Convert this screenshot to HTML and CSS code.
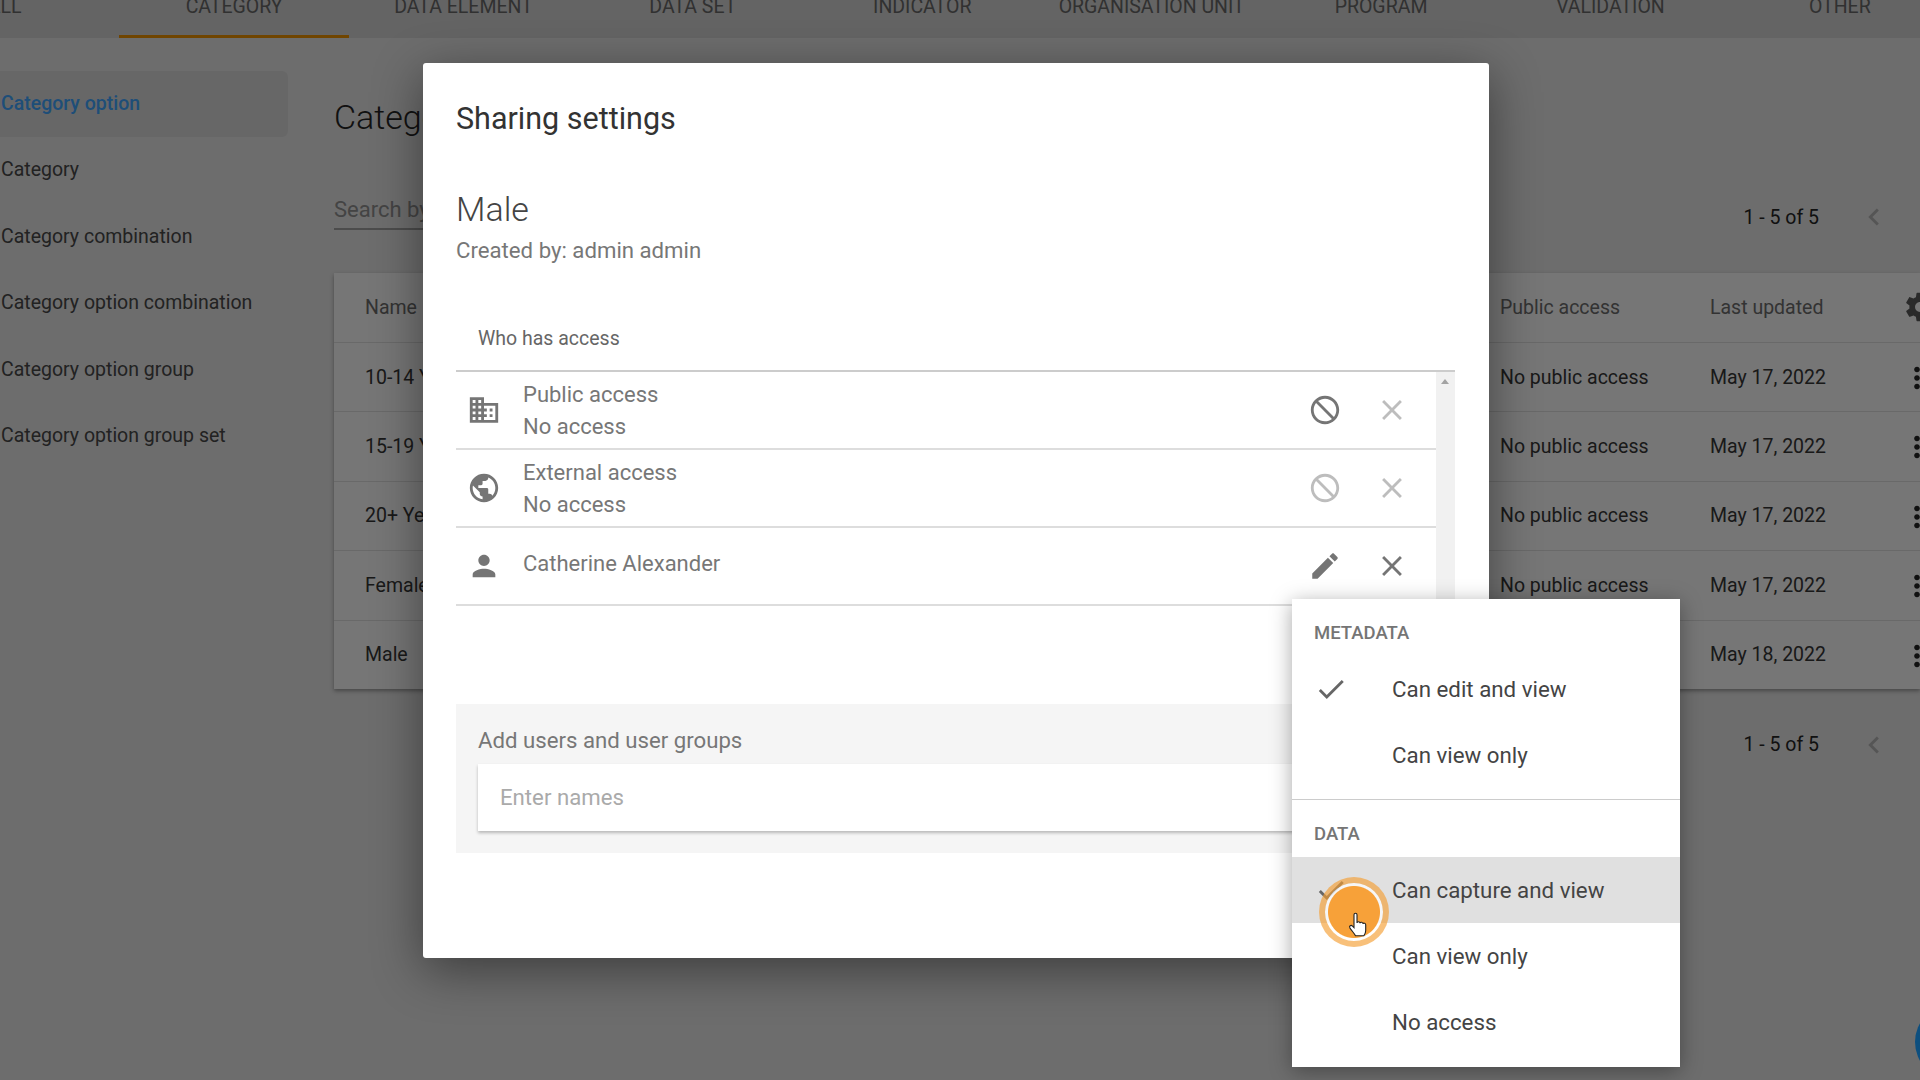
FILE: index.html
```html
<!DOCTYPE html>
<html>
<head>
<meta charset="utf-8">
<title>Sharing settings</title>
<link rel="stylesheet" href="styles.css">
</head>
<body>
<svg class="sprites" xmlns="http://www.w3.org/2000/svg">
  <symbol id="i-domain" viewBox="0 0 24 24"><path d="M12 7V3H2v18h20V7H12zM6 19H4v-2h2v2zm0-4H4v-2h2v2zm0-4H4V9h2v2zm0-4H4V5h2v2zm4 12H8v-2h2v2zm0-4H8v-2h2v2zm0-4H8V9h2v2zm0-4H8V5h2v2zm10 12h-8v-2h2v-2h-2v-2h2v-2h-2V9h8v10zm-2-8h-2v2h2v-2zm0 4h-2v2h2v-2z"/></symbol>
  <symbol id="i-public" viewBox="0 0 24 24"><path d="M12 2C6.48 2 2 6.48 2 12s4.48 10 10 10 10-4.48 10-10S17.52 2 12 2zm-1 17.93c-3.95-.49-7-3.85-7-7.93 0-.62.08-1.21.21-1.79L9 15v1c0 1.1.9 2 2 2v1.93zm6.9-2.54c-.26-.81-1-1.39-1.9-1.39h-1v-3c0-.55-.45-1-1-1H8v-2h2c.55 0 1-.45 1-1V7h2c1.1 0 2-.9 2-2v-.41c2.93 1.19 5 4.06 5 7.41 0 2.08-.8 3.97-2.1 5.39z"/></symbol>
  <symbol id="i-person" viewBox="0 0 24 24"><path d="M12 12c2.21 0 4-1.79 4-4s-1.79-4-4-4-4 1.79-4 4 1.79 4 4 4zm0 2c-2.67 0-8 1.34-8 4v2h16v-2c0-2.66-5.33-4-8-4z"/></symbol>
  <symbol id="i-ban" viewBox="0 0 24 24"><path d="M12 2C6.48 2 2 6.48 2 12s4.48 10 10 10 10-4.48 10-10S17.52 2 12 2zm0 18c-4.42 0-8-3.58-8-8 0-1.85.63-3.55 1.69-4.9L16.9 18.31C15.55 19.37 13.85 20 12 20zm6.31-3.1L7.1 5.69C8.45 4.63 10.15 4 12 4c4.42 0 8 3.58 8 8 0 1.85-.63 3.55-1.69 4.9z"/></symbol>
  <symbol id="i-edit" viewBox="0 0 24 24"><path d="M3 17.25V21h3.75L17.81 9.94l-3.75-3.75L3 17.25zM20.71 7.04c.39-.39.39-1.02 0-1.41l-2.34-2.34c-.39-.39-1.02-.39-1.41 0l-1.83 1.83 3.75 3.75 1.83-1.83z"/></symbol>
  <symbol id="i-clear" viewBox="0 0 24 24"><path d="M19 6.41L17.59 5 12 10.59 6.41 5 5 6.41 10.59 12 5 17.59 6.41 19 12 13.41 17.59 19 19 17.59 13.41 12z"/></symbol>
  <symbol id="i-check" viewBox="0 0 24 24"><path d="M9 16.17L4.83 12l-1.42 1.41L9 19 21 7l-1.41-1.41z"/></symbol>
  <symbol id="i-gear" viewBox="0 0 24 24"><path d="M19.43 12.98c.04-.32.07-.64.07-.98s-.03-.66-.07-.98l2.11-1.65c.19-.15.24-.42.12-.64l-2-3.46c-.12-.22-.39-.3-.61-.22l-2.49 1c-.52-.4-1.08-.73-1.69-.98l-.38-2.65C14.46 2.18 14.25 2 14 2h-4c-.25 0-.46.18-.49.42l-.38 2.65c-.61.25-1.17.59-1.69.98l-2.49-1c-.23-.09-.49 0-.61.22l-2 3.46c-.13.22-.07.49.12.64l2.11 1.65c-.04.32-.07.65-.07.98s.03.66.07.98l-2.11 1.65c-.19.15-.24.42-.12.64l2 3.46c.12.22.39.3.61.22l2.49-1c.52.4 1.08.73 1.69.98l.38 2.65c.03.24.24.42.49.42h4c.25 0 .46-.18.49-.42l.38-2.65c.61-.25 1.17-.59 1.69-.98l2.49 1c.23.09.49 0 .61-.22l2-3.46c.12-.22.07-.49-.12-.64l-2.11-1.65zM12 15.5c-1.93 0-3.5-1.57-3.5-3.5s1.57-3.5 3.5-3.5 3.5 1.57 3.5 3.5-1.57 3.5-3.5 3.5z"/></symbol>
  <symbol id="i-more" viewBox="0 0 24 24"><path d="M12 8c1.1 0 2-.9 2-2s-.9-2-2-2-2 .9-2 2 .9 2 2 2zm0 2c-1.1 0-2 .9-2 2s.9 2 2 2 2-.9 2-2-.9-2-2-2zm0 6c-1.1 0-2 .9-2 2s.9 2 2 2 2-.9 2-2-.9-2-2-2z"/></symbol>
  <symbol id="i-prev" viewBox="0 0 24 24"><path d="M15.41 7.41L14 6l-6 6 6 6 1.41-1.41L10.83 12z"/></symbol>
</svg>

<div class="page">
  <nav class="tabs">
    <a class="tab">All</a>
    <a class="tab tab-active">Category</a>
    <a class="tab">Data element</a>
    <a class="tab">Data set</a>
    <a class="tab">Indicator</a>
    <a class="tab">Organisation unit</a>
    <a class="tab">Program</a>
    <a class="tab">Validation</a>
    <a class="tab">Other</a>
  </nav>

  <div class="content">
    <ul class="side">
      <li class="side-item side-active">Category option</li>
      <li class="side-item">Category</li>
      <li class="side-item">Category combination</li>
      <li class="side-item">Category option combination</li>
      <li class="side-item">Category option group</li>
      <li class="side-item">Category option group set</li>
    </ul>

    <main class="list">
      <h1 class="list-title">Category option</h1>
      <div class="list-tools">
        <div class="search">Search by name</div>
        <div class="pager pager-top">
          <span>1 - 5 of 5</span>
          <svg class="pager-icon"><use href="#i-prev"/></svg>
        </div>
      </div>
      <div class="card">
        <div class="tr th">
          <span>Name</span><span>Public access</span><span>Last updated</span>
          <svg class="gear"><use href="#i-gear"/></svg>
        </div>
        <div class="tr">
          <span>10-14 Years</span><span>No public access</span><span>May 17, 2022</span>
          <svg class="more"><use href="#i-more"/></svg>
        </div>
        <div class="tr">
          <span>15-19 Years</span><span>No public access</span><span>May 17, 2022</span>
          <svg class="more"><use href="#i-more"/></svg>
        </div>
        <div class="tr">
          <span>20+ Years</span><span>No public access</span><span>May 17, 2022</span>
          <svg class="more"><use href="#i-more"/></svg>
        </div>
        <div class="tr">
          <span>Female</span><span>No public access</span><span>May 17, 2022</span>
          <svg class="more"><use href="#i-more"/></svg>
        </div>
        <div class="tr">
          <span>Male</span><span>No public access</span><span>May 18, 2022</span>
          <svg class="more"><use href="#i-more"/></svg>
        </div>
      </div>
      <div class="pager pager-bottom">
        <span>1 - 5 of 5</span>
        <svg class="pager-icon"><use href="#i-prev"/></svg>
      </div>
    </main>
  </div>

  <div class="fab"></div>
  <div class="scrim"></div>

  <section class="modal">
    <h2 class="modal-title">Sharing settings</h2>
    <h3 class="object-name">Male</h3>
    <p class="created">Created by: admin admin</p>

    <div class="access-head">Who has access</div>
    <div class="access">
      <div class="access-rows">
        <div class="row">
          <svg class="icon row-icon"><use href="#i-domain"/></svg>
          <div class="row-text"><div>Public access</div><div>No access</div></div>
          <svg class="icon act-strong"><use href="#i-ban"/></svg>
          <svg class="icon act-faint"><use href="#i-clear"/></svg>
        </div>
        <div class="row">
          <svg class="icon row-icon"><use href="#i-public"/></svg>
          <div class="row-text"><div>External access</div><div>No access</div></div>
          <svg class="icon act-faint"><use href="#i-ban"/></svg>
          <svg class="icon act-faint"><use href="#i-clear"/></svg>
        </div>
        <div class="row">
          <svg class="icon row-icon"><use href="#i-person"/></svg>
          <div class="row-text row-text-up"><div>Catherine Alexander</div></div>
          <svg class="icon act-strong"><use href="#i-edit"/></svg>
          <svg class="icon act-strong"><use href="#i-clear"/></svg>
        </div>
      </div>
      <div class="scrollbar"><span class="scroll-up"></span></div>
    </div>

    <div class="add-panel">
      <div class="add-label">Add users and user groups</div>
      <div class="add-input">Enter names</div>
    </div>
  </section>

  <div class="menu">
    <div class="menu-head">Metadata</div>
    <div class="menu-item"><svg class="icon menu-check"><use href="#i-check"/></svg>Can edit and view</div>
    <div class="menu-item">Can view only</div>
    <hr class="menu-line">
    <div class="menu-head">Data</div>
    <div class="menu-item menu-hover"><svg class="icon menu-check"><use href="#i-check"/></svg>Can capture and view</div>
    <div class="menu-item">Can view only</div>
    <div class="menu-item">No access</div>
  </div>

  <div class="pointer">
    <svg class="hand" viewBox="0 0 20 26">
      <path d="M6 2.2c0-2 3-2 3 0v8.3c.2-1.6 3-1.6 3 .2.3-1.4 2.9-1.2 2.9.6.5-1.1 2.8-.8 2.8 1v5.6c0 2.600-.9 3.900-1.800 5.300H7.500c-1-2-3-4-5.500-7.600-1.300-1.900.9-3.600 2.500-2l1.500 1.500z" fill="#fff" stroke="#222" stroke-width="1.100"/>
    </svg>
  </div>
</div>
</body>
</html>
```

FILE: styles.css
```css
* {
	box-sizing:border-box;
}
html, body {
	margin:0;
	height:100%;
	overflow:hidden;
}
body {
	font-family:Roboto, "Liberation Sans", sans-serif;
	background-color:#dadada;
	color:#000;
}
.sprites {
	display:none;
}
.page {
	position:relative;
	width:1920px;
	height:1080px;
	overflow:hidden;
}

/* top tabs, scrolled off the top and left edge */
.tabs {
	display:flex;
	height:62px;
	margin:-24px 0 0 -110px;
	background-color:#c8c8c8;
}
.tab {
	flex:0 0 229.4px;
	padding-top:19px;
	text-align:center;
	text-transform:uppercase;
	font-size:19.500px;
	color:#626262;
	border-bottom:3px solid transparent;
}
.tab-active {
	border-bottom-color:#e08a00;
}

.content {
	display:flex;
}
.side {
	list-style:none;
	width:288px;
	margin:33px 0 0;
	padding:0;
	flex:none;
}
.side-item {
	height:66.400px;
	line-height:66px;
	padding-left:1px;
	font-size:19.500px;
	color:#444;
	white-space:nowrap;
}
.side-active {
	border-radius:0 6px 6px 0;
	background-color:#cfcfcf;
	color:#3d9cf0;
	font-weight:500;
}

.list {
	flex:1;
	margin-left:46px;
	min-width:0;
}
.list-title {
	margin:59px 0 0;
	font-size:34px;
	line-height:40px;
	font-weight:300;
	color:#222;
}
.list-tools {
	display:flex;
	justify-content:space-between;
	height:136px;
}
.search {
	width:300px;
	height:46px;
	margin-top:47px;
	padding-top:6px;
	font-size:22px;
	line-height:40px;
	color:#888;
	border-bottom:2px solid #999;
}
.pager {
	display:flex;
	align-items:center;
	height:78px;
	font-size:19.500px;
	color:#222;
}
.pager-top {
	margin-top:41px;
}
.pager-icon {
	width:34px;
	height:34px;
	margin:0 29px 0 38px;
	fill:#aaa;
}
.pager-bottom {
	justify-content:flex-end;
	height:112px;
}
.card {
	background-color:#ececec;
	box-shadow:0 2px 4px rgba(0,0,0,.35);
}
.tr {
	display:grid;
	grid-template-columns:1135px 210px 1fr;
	align-items:center;
	position:relative;
	height:69.400px;
	padding-left:31px;
	font-size:19.500px;
	color:#333;
	border-top:1px solid #d2d2d2;
}
.th {
	height:69px;
	color:#666;
	border-top:none;
}
.gear {
	position:absolute;
	right:-17px;
	top:17px;
	width:34px;
	height:34px;
	fill:#555;
}
.more {
	position:absolute;
	right:-14px;
	top:18px;
	width:34px;
	height:34px;
	fill:#222;
}
.fab {
	position:absolute;
	left:1915px;
	top:1004px;
	width:76px;
	height:76px;
	border-radius:50%;
	background-color:#1a9eff;
}
.scrim {
	position:absolute;
	inset:0;
	background-color:rgba(0,0,0,.5);
}

/* dialog */
.modal {
	position:absolute;
	left:423px;
	top:63px;
	width:1066px;
	height:895px;
	padding:40px 34px 0 33px;
	border-radius:3px;
	background-color:#fff;
	box-shadow:0 12px 50px rgba(0,0,0,.45);
}
.modal-title {
	margin:0;
	font-size:30.500px;
	line-height:32px;
	font-weight:400;
	color:#333;
}
.object-name {
	margin:54px 0 0;
	font-size:34px;
	line-height:40px;
	font-weight:300;
	color:#444;
}
.created {
	margin:9px 0 0;
	font-size:22.200px;
	line-height:24px;
	color:#777;
}
.access-head {
	height:67px;
	margin-top:43px;
	padding-left:22px;
	line-height:68px;
	font-size:19.500px;
	color:#666;
	border-bottom:2px solid #ccc;
}
.access {
	display:flex;
	height:332px;
}
.access-rows {
	flex:1;
}
.row {
	display:flex;
	align-items:center;
	height:78px;
	padding:0 27px 0 11px;
	border-bottom:2px solid #ddd;
}
.icon {
	flex:none;
	width:34px;
	height:34px;
}
.row-icon {
	margin-right:22px;
	fill:#757575;
}
.row-text {
	flex:1;
	padding-top:2px;
	font-size:22px;
	line-height:32px;
	color:#777;
}
.row-text-up {
	margin-top:-6px;
}
.act-strong {
	margin-left:33px;
	fill:#757575;
}
.act-faint {
	margin-left:33px;
	fill:#bdbdbd;
}
.scrollbar {
	flex:0 0 19px;
	padding:7px 0 0 5px;
	background-color:#f1f1f1;
}
.scroll-up {
	display:block;
	width:0;
	height:0;
	border-left:4px solid transparent;
	border-right:4px solid transparent;
	border-bottom:5px solid #a3a3a3;
}
.add-panel {
	height:149px;
	padding:0 22px;
	background-color:#f5f5f5;
}
.add-label {
	height:60px;
	line-height:72px;
	font-size:22.200px;
	color:#777;
}
.add-input {
	height:67px;
	padding-left:22px;
	line-height:67px;
	font-size:22.200px;
	color:#aaa;
	background-color:#fff;
	box-shadow:0 2px 3px rgba(0,0,0,.25);
}

/* permission menu */
.menu {
	position:absolute;
	left:1292px;
	top:599px;
	width:388px;
	height:468px;
	background-color:#fff;
	box-shadow:0 4px 20px rgba(0,0,0,.35);
}
.menu-head {
	height:57px;
	padding-left:22px;
	line-height:68px;
	font-size:18.500px;
	font-weight:500;
	text-transform:uppercase;
	color:#757575;
}
.menu-item {
	position:relative;
	height:66.300px;
	padding-left:100px;
	line-height:66px;
	font-size:22.300px;
	color:#444;
}
.menu-check {
	position:absolute;
	left:22px;
	top:16px;
	fill:#666;
}
.menu-hover {
	background-color:#e0e0e0;
}
.menu-line {
	height:1px;
	margin:10px 0 0;
	border:none;
	background-color:#ccc;
}

/* click highlight from the recording */
.pointer {
	position:absolute;
	left:1319px;
	top:877px;
	width:70px;
	height:70px;
	border:6px solid rgba(245,158,50,.65);
	border-radius:50%;
	background:radial-gradient(circle, #f7a139 25.500px, rgba(255,255,255,.7) 26.500px);
	background-clip:padding-box;
}
.hand {
	position:absolute;
	left:23px;
	top:29px;
	width:20px;
	height:27px;
}
```
